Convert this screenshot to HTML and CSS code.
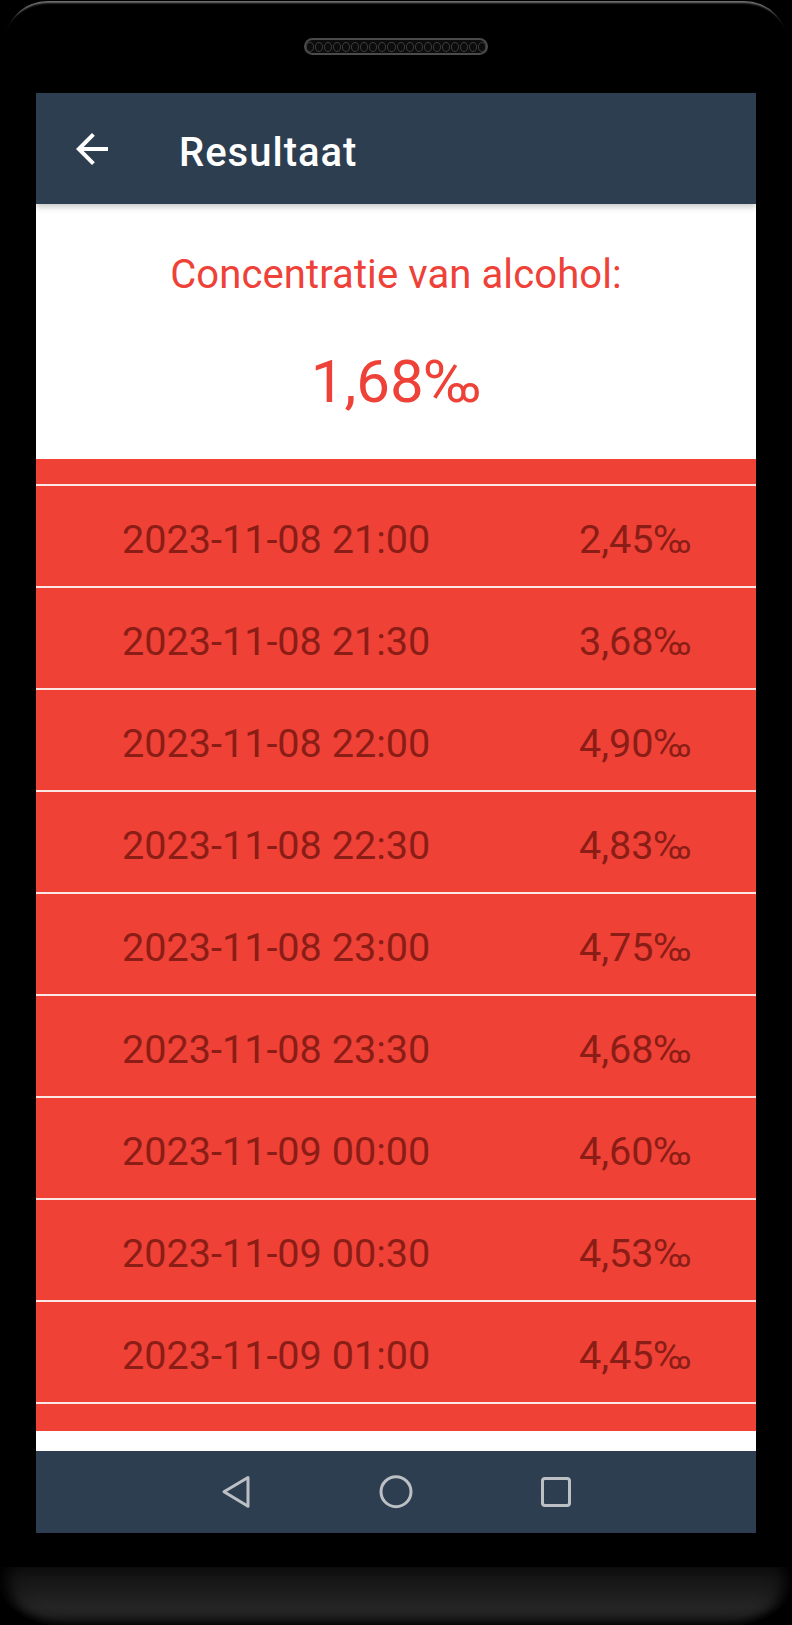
FILE: index.html
```html
<!DOCTYPE html>
<html lang="nl">
<head>
    <meta charset="UTF-8">
    <meta name="viewport" content="width=device-width, initial-scale=1.0">
    <title>Resultaat</title>
    <link rel="stylesheet" href="styles.css">
</head>
<body>
    <div class="phone">
        <div class="bezel-top">
            <div class="speaker">
                <span></span><span></span><span></span><span></span><span></span>
                <span></span><span></span><span></span><span></span><span></span>
                <span></span><span></span><span></span><span></span><span></span>
                <span></span><span></span><span></span><span></span><span></span>
            </div>
        </div>

        <div class="screen">
            <header class="appbar">
                <svg class="back" viewBox="0 0 24 24" width="48" height="48">
                    <path d="M20 11H7.83l5.59-5.59L12 4l-8 8 8 8 1.41-1.41L7.83 13H20v-2z" fill="#ffffff"/>
                </svg>
                <h1>Resultaat</h1>
            </header>

            <section class="summary">
                <p class="label">Concentratie van alcohol:</p>
                <p class="value">1,68‰</p>
            </section>

            <!-- list is scrolled: the bottom of the previous row shows at the top -->
            <div class="list">
                <div class="row"><span class="time">2023-11-08 21:00</span><span class="promille">2,45‰</span></div>
                <div class="row"><span class="time">2023-11-08 21:30</span><span class="promille">3,68‰</span></div>
                <div class="row"><span class="time">2023-11-08 22:00</span><span class="promille">4,90‰</span></div>
                <div class="row"><span class="time">2023-11-08 22:30</span><span class="promille">4,83‰</span></div>
                <div class="row"><span class="time">2023-11-08 23:00</span><span class="promille">4,75‰</span></div>
                <div class="row"><span class="time">2023-11-08 23:30</span><span class="promille">4,68‰</span></div>
                <div class="row"><span class="time">2023-11-09 00:00</span><span class="promille">4,60‰</span></div>
                <div class="row"><span class="time">2023-11-09 00:30</span><span class="promille">4,53‰</span></div>
                <div class="row"><span class="time">2023-11-09 01:00</span><span class="promille">4,45‰</span></div>
                <div class="row"></div>
            </div>
            <div class="list-end"></div>

            <nav class="navbar">
                <svg viewBox="0 0 36 36" width="36" height="36">
                    <path d="M30 3.5 L6 17.7 L30 32.3 Z" class="nav-stroke"/>
                </svg>
                <svg viewBox="0 0 36 36" width="36" height="36">
                    <circle cx="18" cy="17.7" r="15" class="nav-stroke"/>
                </svg>
                <svg viewBox="0 0 36 36" width="36" height="36">
                    <rect x="4.5" y="4.5" width="27" height="27" rx="2.5" class="nav-stroke"/>
                </svg>
            </nav>
        </div>

        <div class="bezel-bottom"></div>
        <div class="chin"></div>
    </div>
</body>
</html>
```

FILE: styles.css
```css
/* phone frame */
html, body {
    margin: 0;
    padding: 0;
    background-color: #000;
}
body {
    width: 792px;
    height: 1625px;
    overflow: hidden;
    font-family: Roboto, "Noto Sans", Arial, sans-serif;
}
.phone {
    margin: 1px 4px 0;
    height: 1624px;
    border-radius: 44px 44px 0 0;
    background-color: #000;
    box-shadow: inset 0 6px 2px -4px rgba(255, 255, 255, 0.45);
    display: flex;
    flex-direction: column;
}
.bezel-top {
    height: 92px;
    display: flex;
    justify-content: center;
    align-items: flex-start;
}
.speaker {
    margin-top: 37px;
    width: 184px;
    height: 17px;
    box-sizing: border-box;
    border: 2px solid #4b4b4b;
    border-radius: 9px;
    background-color: #0c0c0c;
    display: flex;
    justify-content: center;
    align-items: center;
    gap: 1px;
}
.speaker span {
    width: 7px;
    height: 8px;
    border: 1px solid #3c3c3c;
    border-radius: 50%;
}

/* app screen */
.screen {
    margin: 0 32px;
    background-color: #ffffff;
    display: flex;
    flex-direction: column;
}
.appbar {
    height: 111px;
    background-color: #2d3e50;
    display: flex;
    align-items: center;
    padding-left: 32px;
    position: relative;
    z-index: 1;
    box-shadow: 0 3px 6px rgba(0, 0, 0, 0.22);
}
.appbar h1 {
    margin: 7px 0 0 63px;
    color: #ffffff;
    font-size: 40px;
    font-weight: 500;
    letter-spacing: 1px;
}
.summary {
    height: 255px;
    box-sizing: border-box;
    padding-top: 47px;
    text-align: center;
    color: #ee4137;
}
.summary p {
    margin: 0;
}
.label {
    font-size: 40px;
    line-height: 48px;
    letter-spacing: 0.1px;
}
.value {
    margin-top: 47px !important;
    font-size: 60px;
    line-height: 72px;
}

.list {
    height: 972px;
    box-sizing: border-box;
    padding-top: 25px;
    background-color: #f04137;
    overflow: hidden;
}
.row {
    height: 94px;
    border-top: 2px solid #fde6e3;
    display: grid;
    grid-template-columns: 457px 1fr;
    align-items: center;
    padding: 6px 0 0 86px;
    color: #8a1d15;
    font-size: 39.6px;
}
.list-end {
    height: 20px;
    background-color: #ffffff;
}
.navbar {
    height: 82px;
    background-color: #2d3e50;
    display: flex;
    justify-content: center;
    align-items: center;
    gap: 124px;
}
.nav-stroke {
    fill: none;
    stroke: #bcc0c5;
    stroke-width: 3;
    stroke-linejoin: round;
}

.bezel-bottom {
    height: 34px;
}
.chin {
    height: 58px;
    margin: 0 -4px;
    border-radius: 0 0 60px 60px / 0 0 44px 44px;
    background: linear-gradient(to bottom, #0f0f0f 0%, #1a1a1a 35%, #252525 70%, #1c1c1c 100%);
    box-shadow: inset 18px 0 16px -10px #000, inset -18px 0 16px -10px #000, inset 0 -6px 8px -4px #000;
}
```
